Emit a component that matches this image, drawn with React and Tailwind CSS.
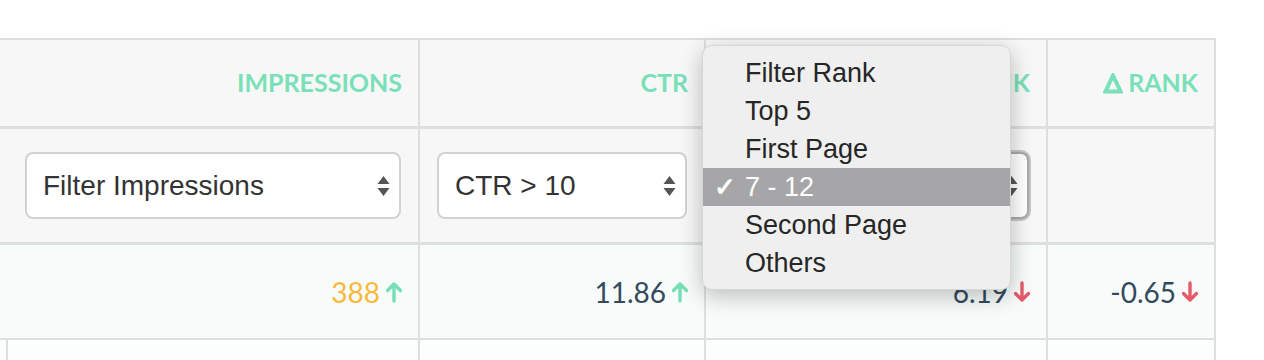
import React from "react";

/* =========================================
   SMALL DRAWINGS
========================================= */

const Arrow = ({ dir = "up" }) => (
  <svg
    width="16"
    height="22"
    viewBox="0 0 16 22"
    className={dir === "up" ? "text-[#76dfb5]" : "text-[#e65a6c]"}
    style={{ transform: dir === "up" ? "none" : "rotate(180deg)" }}
  >
    <path
      d="M8 20V3M1.5 9.5L8 3l6.5 6.5"
      fill="none"
      stroke="currentColor"
      strokeWidth="3.4"
      strokeLinecap="round"
      strokeLinejoin="round"
    />
  </svg>
);

const SelectArrows = () => (
  <svg width="13" height="22" viewBox="0 0 13 22" className="text-[#555]">
    <path d="M6.5 1L12.5 9H0.5Z" fill="currentColor" />
    <path d="M6.5 21L12.5 13H0.5Z" fill="currentColor" />
  </svg>
);

const Delta = () => (
  <svg width="20" height="21" viewBox="0 0 20 21" className="text-[#79e0b8] mr-[5px]">
    <path d="M10 2.5L17.5 18.5H2.5Z" fill="none" stroke="currentColor" strokeWidth="4" strokeLinejoin="miter" />
  </svg>
);

/* =========================================
   CELLS
========================================= */

const head = "h-[86px] flex items-center justify-end pr-4 border-r-2 border-[#dedede] bg-[#f7f7f7]";
const filt = "h-[113px] flex items-center px-[17px] border-r-2 border-[#dedede] bg-[#f7f7f7]";
const data = "h-[93px] flex items-center justify-end gap-[6px] pr-4 border-r-2 border-[#dedede] bg-[#f7fcfa]";
const title = "text-[25px] font-bold text-[#79e0b8]";

const FakeSelect = ({ label, focused }) => (
  <div
    className={
      "w-full h-[67px] flex items-center justify-between pl-[16px] pr-[9px] bg-white rounded-lg border-2 " +
      (focused ? "border-[#a9a9a9] ring-2 ring-[#c4c4c4]" : "border-[#d2d2d2]")
    }
  >
    <span className="text-[28px] text-[#333]" style={{ fontFamily: "'Liberation Sans', Arial, sans-serif" }}>
      {label}
    </span>
    <SelectArrows />
  </div>
);

const menuItems = ["Filter Rank", "Top 5", "First Page", "7 - 12", "Second Page", "Others"];

export default function App() {
  return (
    <div className="relative w-[1264px] h-[360px] bg-white overflow-hidden" style={{ fontFamily: "Lato, sans-serif" }}>
      <div className="pt-[38px]">
        <div className="w-[1216px] border-t-2 border-[#dedede]">

          {/* Header */}
          <div className="grid grid-cols-[8px_412px_286px_342px_168px] border-b-[3px] border-[#dedede]">
            <div className={head} />
            <div className={head}>
              <span className={title}>IMPRESSIONS</span>
            </div>
            <div className={head}>
              <span className={title}>CTR</span>
            </div>
            <div className={head}>
              <span className={title}>RANK</span>
            </div>
            <div className={head}>
              <Delta />
              <span className={title}>RANK</span>
            </div>
          </div>

          {/* Filters */}
          <div className="grid grid-cols-[8px_412px_286px_342px_168px] border-b-[3px] border-[#dedede]">
            <div className={filt + " px-0"} />
            <div className={filt}>
              <FakeSelect label="Filter Impressions" />
            </div>
            <div className={filt}>
              <FakeSelect label="CTR > 10" />
            </div>
            <div className={filt}>
              <FakeSelect label="7 - 12" focused />
            </div>
            <div className={filt} />
          </div>

          {/* Data row */}
          <div className="grid grid-cols-[8px_412px_286px_342px_168px] border-b-2 border-[#dedede]">
            <div className={data + " pr-0"} />
            <div className={data}>
              <span className="text-[28px] text-[#f8b93b]">388</span>
              <Arrow dir="up" />
            </div>
            <div className={data}>
              <span className="text-[28px] text-[#34495e]">11.86</span>
              <Arrow dir="up" />
            </div>
            <div className={data}>
              <span className="text-[28px] text-[#34495e]">6.19</span>
              <Arrow dir="down" />
            </div>
            <div className={data}>
              <span className="text-[28px] text-[#34495e]">-0.65</span>
              <Arrow dir="down" />
            </div>
          </div>

          {/* Next row */}
          <div className="grid grid-cols-[8px_412px_286px_342px_168px]">
            <div className="h-[40px] border-r-2 border-[#dedede] bg-[#fcfefd]" />
            <div className="h-[40px] border-r-2 border-[#dedede] bg-[#fcfefd]" />
            <div className="h-[40px] border-r-2 border-[#dedede] bg-[#fcfefd]" />
            <div className="h-[40px] border-r-2 border-[#dedede] bg-[#fcfefd]" />
            <div className="h-[40px] border-r-2 border-[#dedede] bg-[#fcfefd]" />
          </div>
        </div>
      </div>

      {/* Native popup menu */}
      <div
        className="absolute left-[702px] top-[45px] w-[309px] h-[245px] py-[8px] rounded-[10px] bg-[#efefef] border border-[#d6d6d6] shadow-[0_6px_22px_rgba(0,0,0,0.25)]"
        style={{ fontFamily: "'Liberation Sans', Arial, sans-serif" }}
      >
        {menuItems.map((item) => {
          const active = item === "7 - 12";
          return (
            <div
              key={item}
              className={
                "relative h-[38px] flex items-center pl-[42px] text-[27px] " +
                (active ? "bg-[#a6a6a9] text-white" : "text-[#262626]")
              }
            >
              {active && <span className="absolute left-[11px] text-[26px] font-bold">✓</span>}
              {item}
            </div>
          );
        })}
      </div>
    </div>
  );
}
